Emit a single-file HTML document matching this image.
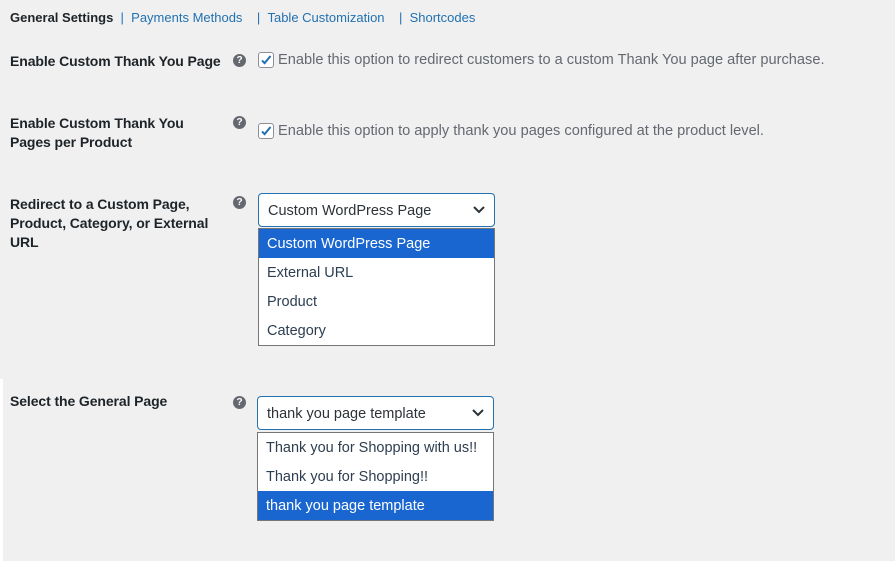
<!DOCTYPE html>
<html><head><meta charset="utf-8"><style>
body{margin:0;width:895px;height:561px;background:#f0f0f1;font-family:"Liberation Sans",sans-serif;position:relative;overflow:hidden;color:#1d2327}
.a{position:absolute;white-space:nowrap}
.nav{top:10px;left:10px;font-size:13px}
.nav b{color:#1d2327}
.nav span{color:#2271b1}
.lbl{font-weight:bold;font-size:14px;line-height:19px;color:#1d2327;left:10px;letter-spacing:-0.1px}
.q{width:13px;height:13px;border-radius:50%;background:#646970;color:#fff;font-size:10px;font-weight:bold;text-align:center;line-height:13px;left:233px}
.cb{width:14px;height:14px;border:1px solid #8c8f94;border-radius:3px;background:#fff;left:258px}
.cb svg{position:absolute;left:1px;top:1px}
.txt{font-size:14.6px;color:#646970;left:278px}
.sel{left:258px;height:34px;border:1px solid #2271b1;border-radius:4px;background:#fff;font-size:14.5px;color:#2c3338;box-sizing:border-box;width:237px;padding-left:9px;line-height:35px}
.sel svg{position:absolute;right:9px;top:12px}
.dd{left:258px;width:237px;box-sizing:border-box;border:1px solid #767676;background:#fff;font-size:14.5px;color:#2c3e50}
.dd div{height:29px;line-height:31px;padding-left:8px;white-space:nowrap}
.dd .h{background:#1a66d1;color:#fff}
</style></head><body>
<div class="a nav"><b>General Settings</b> <span>&nbsp;| &nbsp;Payments Methods &nbsp;&nbsp; | &nbsp;Table Customization &nbsp;&nbsp; | &nbsp;Shortcodes</span></div>

<div class="a lbl" style="top:52px">Enable Custom Thank You Page</div>
<div class="a q" style="top:54px">?</div>
<div class="a cb" style="top:52px"><svg width="12" height="12" viewBox="0 0 12 12"><path d="M2 6.5l2.6 2.6L10.5 2" stroke="#2271b1" stroke-width="2" fill="none"/></svg></div>
<div class="a txt" style="top:52px">Enable this option to redirect customers to a custom Thank You page after purchase.</div>

<div class="a lbl" style="top:114px">Enable Custom Thank You<br>Pages per Product</div>
<div class="a q" style="top:116px">?</div>
<div class="a cb" style="top:123px"><svg width="12" height="12" viewBox="0 0 12 12"><path d="M2 6.5l2.6 2.6L10.5 2" stroke="#2271b1" stroke-width="2" fill="none"/></svg></div>
<div class="a txt" style="top:123px">Enable this option to apply thank you pages configured at the product level.</div>

<div class="a lbl" style="top:195px">Redirect to a Custom Page,<br>Product, Category, or External<br>URL</div>
<div class="a q" style="top:196px">?</div>
<div class="a sel" style="top:193px">Custom WordPress Page<svg width="12" height="8" viewBox="0 0 12 8"><path d="M1 1l5 5 5-5" stroke="#2c3338" stroke-width="2" fill="none"/></svg></div>
<div class="a dd" style="top:228px"><div class="h">Custom WordPress Page</div><div>External URL</div><div>Product</div><div>Category</div></div>

<div class="a" style="left:0;top:379px;width:3px;height:182px;background:#fff"></div>
<div class="a lbl" style="top:392px">Select the General Page</div>
<div class="a q" style="top:396px">?</div>
<div class="a sel" style="top:396px;left:257px">thank you page template<svg width="12" height="8" viewBox="0 0 12 8"><path d="M1 1l5 5 5-5" stroke="#2c3338" stroke-width="2" fill="none"/></svg></div>
<div class="a dd" style="top:432px;left:257px"><div>Thank you for Shopping with us!!</div><div>Thank you for Shopping!!</div><div class="h">thank you page template</div></div>
</body></html>
